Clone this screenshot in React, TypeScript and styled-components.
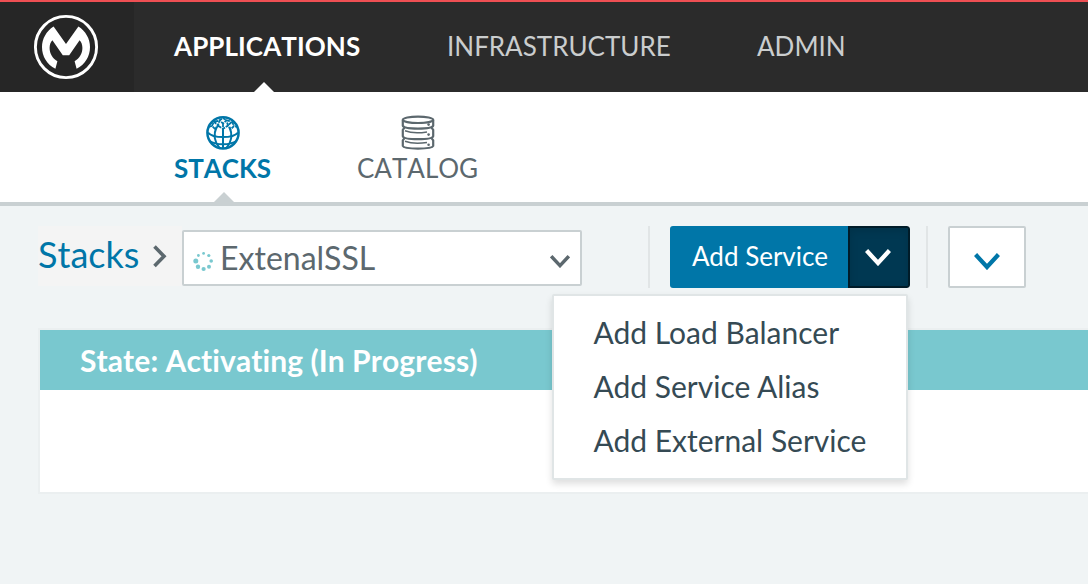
import React from "react";
import styled, { createGlobalStyle, css } from "styled-components";

const GlobalStyle = createGlobalStyle`
  * { box-sizing: border-box; }
  body {
    margin: 0;
    background: #f0f4f5;
    font-family: Lato, "Open Sans", sans-serif;
    font-kerning: none;
    font-variant-ligatures: none;
    overflow: hidden;
  }
  button { font-family: inherit; }
`;

const Page = styled.div`
  width: 1088px;
  height: 584px;
  overflow: hidden;
`;

const Header = styled.header`
  display: flex;
  height: 92px;
  border-top: 2px solid #ee4f53;
  background: #2b2b2b;
`;

const LogoCell = styled.a`
  display: flex;
  width: 134px;
  padding: 12px 0 0 33px;
  background: #262626;
`;

const MainNav = styled.nav`
  display: flex;
  gap: 86px;
  padding-left: 40px;
`;

const arrow = css<{ $shift: number; $tone: string }>`
  &::after {
    content: "";
    position: absolute;
    bottom: 0;
    left: calc(50% + ${(p) => p.$shift}px);
    border: 10px solid transparent;
    border-top: 0;
    border-bottom-color: ${(p) => p.$tone};
  }
`;

const MainLink = styled.a<{ $width: number; $active?: boolean; $shift: number; $tone: string }>`
  position: relative;
  width: ${(p) => p.$width}px;
  line-height: 88px;
  font-size: 26px;
  font-weight: ${(p) => (p.$active ? 700 : 400)};
  letter-spacing: ${(p) => (p.$active ? "0.08px" : "normal")};
  color: ${(p) => (p.$active ? "#fff" : "#cacdce")};
  white-space: nowrap;
  ${(p) => p.$active && arrow}
`;

const SubNav = styled.nav`
  display: flex;
  gap: 86px;
  height: 114px;
  padding: 22px 0 0 174px;
  border-bottom: 4px solid #c9d0d2;
  background: #fff;
`;

const SubLink = styled.a<{ $width: number; $active?: boolean; $shift: number; $tone: string }>`
  position: relative;
  display: flex;
  flex-direction: column;
  align-items: center;
  width: ${(p) => p.$width}px;
  font-size: 26px;
  line-height: 32px;
  font-weight: ${(p) => (p.$active ? 700 : 400)};
  color: ${(p) => (p.$active ? "#0076a8" : "#5c686e")};
  white-space: nowrap;
  svg { display: block; margin-bottom: 2px; }
  ${(p) => p.$active && arrow}
`;

const Toolbar = styled.div`
  display: flex;
  align-items: flex-start;
  height: 122px;
  padding: 20px 0 0 38px;
`;

const Crumbs = styled.div`
  display: flex;
  width: 144px;
  height: 60px;
  background: #f4f4f4;
  svg { margin: 19px 0 0 12px; }
`;

const CrumbLink = styled.a`
  width: 102px;
  font-size: 36px;
  line-height: 57px;
  color: #0076a8;
`;

const Select = styled.div`
  display: flex;
  align-items: flex-start;
  width: 400px;
  height: 56px;
  margin: 4px 66px 0 0;
  padding: 0 10px 0 9px;
  border: 2px solid #c9d0d2;
  border-radius: 2px;
  background: #fff;
`;

const SpinnerIcon = styled.svg`
  margin-top: 18px;
`;

const SelectIcon = styled.span`
  display: flex;
  padding-top: 23px;
`;

const SelectValue = styled.span`
  flex: 1;
  padding-left: 7px;
  font-size: 32px;
  line-height: 52px;
  color: #5c686e;
`;

const Divider = styled.div`
  width: 2px;
  height: 62px;
  background: #e1e5e6;
`;

const ButtonGroup = styled.div`
  display: flex;
  width: 240px;
  height: 62px;
  margin: 0 16px 0 20px;
  border-radius: 3px;
  overflow: hidden;
`;

const AddButton = styled.button`
  width: 178px;
  padding: 0 0 2px 2px;
  border: 0;
  background: #0076a8;
  color: #fff;
  font-size: 26px;
  font-kerning: normal;
  line-height: 60px;
`;

const ToggleButton = styled.button`
  display: flex;
  justify-content: center;
  width: 62px;
  padding: 21px 2px 0 0;
  border: 2px solid #001c29;
  border-radius: 0 3px 3px 0;
  background: #003852;
  box-shadow: inset 0 3px 8px rgba(0, 0, 0, 0.12);
`;

const MoreButton = styled.button`
  display: flex;
  justify-content: center;
  width: 78px;
  height: 62px;
  margin-left: 20px;
  padding: 25px 0 0;
  border: 2px solid #c9d0d2;
  border-radius: 2px;
  background: #fff;
`;

const Menu = styled.ul`
  position: absolute;
  top: 294px;
  left: 552px;
  width: 356px;
  height: 186px;
  margin: 0;
  padding: 9px 0 0 39.5px;
  border: 2px solid #e0e5e6;
  border-radius: 2px;
  background: #fff;
  box-shadow: 0 4px 7px rgba(0, 0, 0, 0.13);
  list-style: none;
`;

const MenuItem = styled.li`
  font-size: 30px;
  font-kerning: normal;
  line-height: 54px;
  color: #354a54;
  white-space: nowrap;
`;

const Panel = styled.section`
  width: 1090px;
  height: 166px;
  margin-left: 38px;
  border: 2px solid #ebeff0;
  background: #fff;
`;

const StateBar = styled.h2`
  height: 60px;
  margin: 0;
  padding-left: 40px;
  background: #79c8cf;
  color: #fff;
  font-size: 30px;
  font-weight: 700;
  letter-spacing: 0.08px;
  line-height: 61px;
`;

const Logo = () => (
  <svg width="66" height="66" viewBox="0 0 66 66">
    <circle cx="33" cy="33" r="30.6" fill="none" stroke="#fff" strokeWidth="2.9" />
    <path
      fill="#fff"
      d="M20.6 12.4 L33 30 L45.4 12.4 C52.6 17 57 24.6 57 33 C57 42.4 52 50.6 43.6 54.8 L41.6 47.2 C46.6 44.4 49.4 39.4 49.4 34 C49.4 30.8 48.4 28 46.6 26.2 L36.2 41.2 H29.8 L19.4 26.2 C17.6 28 16.6 30.8 16.6 34 C16.6 39.4 19.4 44.4 24.4 47.2 L22.4 54.8 C14 50.6 9 42.4 9 33 C9 24.6 13.4 17 20.6 12.4 Z"
    />
  </svg>
);

const Globe = () => (
  <svg width="36" height="36" viewBox="0 0 36 36" fill="none" stroke="currentColor" strokeWidth="2">
    <circle cx="18" cy="18.8" r="15.6" strokeWidth="2.5" />
    <path d="M3 18.6 C8 24.6 28 24.6 33 18.6 M4.6 27 C11 31.4 25 31.4 31.4 27" />
    <path d="M18 14.5 V35 M11.5 13 C8.5 20 9.5 28 14.5 34 M24.5 13 C27.5 20 26.5 28 21.5 34" />
    <path
      strokeWidth="1.8"
      strokeDasharray="3.6 0.9"
      d="M3.6 13 L7 12 L10.5 15.5 L13 11.5 L18 14.8 L23 11.5 L25.5 15.5 L29 12 L32.4 13 M7 12 L9 7.5 L13 11.5 L14.5 6.5 L18 9.5 L21.5 6.5 L23 11.5 L27 7.5 L29 12 M9.5 7.5 L14.5 6.5 L18 4 L21.5 6.5 L26.5 7.5 M18 9.5 V14.8"
    />
  </svg>
);

const Database = () => (
  <svg width="36" height="36" viewBox="0 0 36 36" fill="none" stroke="currentColor" strokeWidth="2.2">
    <ellipse cx="18" cy="5.8" rx="15.2" ry="3.2" />
    <path d="M2.8 6 V11.6 C4 15.6 32 15.6 33.2 11.6 V6" />
    <path d="M4.5 13.6 L2.8 15.8 V22.2 C4 26.2 32 26.2 33.2 22.2 V15.8 L31.5 13.6" />
    <path d="M4.5 24.2 L2.8 26.4 V32 C4 35.4 32 35.4 33.2 32 V26.4 L31.5 24.2" />
    <path strokeWidth="1.5" d="M5 16.8 C10 18.7 20 19 27 17.9 M5 27.2 C10 29 20 29.4 27 28.4" />
    <g fill="currentColor" stroke="none">
      <circle cx="28.6" cy="10.6" r="1.3" />
      <circle cx="28.6" cy="20.6" r="1.3" />
      <circle cx="28.6" cy="30.8" r="1.3" />
    </g>
  </svg>
);

const Spinner = () => (
  <SpinnerIcon width="20" height="22" viewBox="0 0 20 22" fill="#79c8cf">
    <circle cx="10.6" cy="3.4" r="1.4" />
    <circle cx="15.8" cy="5.5" r="1.6" />
    <circle cx="18.2" cy="11" r="1.8" />
    <circle cx="16" cy="16.7" r="2" />
    <circle cx="10.6" cy="19" r="2.1" />
    <circle cx="5" cy="16.7" r="2.2" />
    <circle cx="2.8" cy="11" r="2.5" />
    <circle cx="5.4" cy="5.5" r="1.4" />
  </SpinnerIcon>
);

const Chevron = ({ width, height, color, stroke }: { width: number; height: number; color: string; stroke: number }) => {
  const inset = stroke * 0.36;
  return (
    <svg width={width} height={height} fill="none" stroke={color} strokeWidth={stroke}>
      <path d={`M${inset} ${inset} L${width / 2} ${height - stroke * 0.7} L${width - inset} ${inset}`} />
    </svg>
  );
};

export default function App() {
  return (
    <Page>
      <GlobalStyle />
      <Header>
        <LogoCell>
          <Logo />
        </LogoCell>
        <MainNav>
          <MainLink $width={187} $active $shift={-13.5} $tone="#fff">APPLICATIONS</MainLink>
          <MainLink $width={224} $shift={0} $tone="#fff">INFRASTRUCTURE</MainLink>
          <MainLink $width={90} $shift={0} $tone="#fff">ADMIN</MainLink>
        </MainNav>
      </Header>
      <SubNav>
        <SubLink $width={97} $active $shift={-8.5} $tone="#c9d0d2">
          <Globe />
          STACKS
        </SubLink>
        <SubLink $width={121} $shift={0} $tone="#c9d0d2">
          <Database />
          CATALOG
        </SubLink>
      </SubNav>
      <Toolbar>
        <Crumbs>
          <CrumbLink>Stacks</CrumbLink>
          <svg width="15" height="23" fill="none" stroke="#5c686e" strokeWidth="3.6">
            <path d="M2.5 1.6 L12 11.3 L2.5 21" />
          </svg>
        </Crumbs>
        <Select>
          <Spinner />
          <SelectValue>ExtenalSSL</SelectValue>
          <SelectIcon>
            <Chevron width={20} height={13} color="#5c686e" stroke={3.4} />
          </SelectIcon>
        </Select>
        <Divider />
        <ButtonGroup>
          <AddButton>Add Service</AddButton>
          <ToggleButton aria-expanded="true">
            <Chevron width={26} height={17} color="#fff" stroke={4.3} />
          </ToggleButton>
        </ButtonGroup>
        <Divider />
        <MoreButton>
          <Chevron width={26} height={17} color="#0076a8" stroke={4.3} />
        </MoreButton>
      </Toolbar>
      <Panel>
        <StateBar>State: Activating (In Progress)</StateBar>
      </Panel>
      <Menu>
        <MenuItem>Add Load Balancer</MenuItem>
        <MenuItem>Add Service Alias</MenuItem>
        <MenuItem>Add External Service</MenuItem>
      </Menu>
    </Page>
  );
}
